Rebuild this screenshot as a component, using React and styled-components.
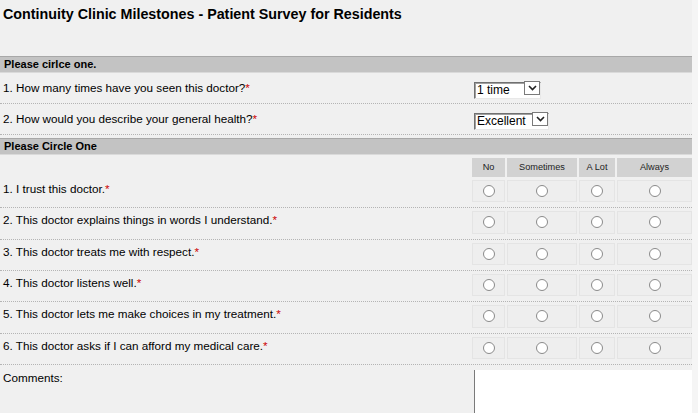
import React from 'react';
import styled, { createGlobalStyle } from 'styled-components';

const GlobalStyle = createGlobalStyle`
  html, body {
    margin: 0;
    padding: 0;
    background: #f5f5f5;
  }
  body {
    font-family: "Liberation Sans", Arial, sans-serif;
    color: #000;
  }
`;

const Page = styled.div`
  width: 692px;
  background: #f0f0f0;
  min-height: 413px;
  overflow: hidden;
`;

const Title = styled.h1`
  margin: 0;
  padding: 6px 0 0 3px;
  height: 50px;
  font-size: 14.3px;
  line-height: 17px;
  font-weight: bold;
`;

const SectionBar = styled.div`
  height: 15px;
  margin-top: ${props => props.$gap || 0}px;
  background: #c3c3c3;
  border-top: 1px solid #a8a8a8;
  border-bottom: 1px solid #dadada;
  padding-left: 4px;
  font-size: 11px;
  font-weight: bold;
  line-height: 15px;
`;

const FieldRow = styled.div`
  display: grid;
  grid-template-columns: 474px 1fr;
  align-items: center;
  height: 30px;
  border-bottom: 1px dotted #b4b4b4;
`;

const Label = styled.div`
  padding-left: 3px;
  padding-bottom: 2px;
  font-size: 11.7px;
`;

const Required = styled.span`
  color: #cc0000;
`;

const SelectWrap = styled.div`
  position: relative;
  width: ${props => props.$width}px;
  height: 17px;
`;

const Select = styled.select`
  appearance: none;
  -webkit-appearance: none;
  box-sizing: border-box;
  width: 100%;
  height: 100%;
  margin: 0;
  padding: 0 0 0 2px;
  background: #fff;
  border: 1px solid;
  border-color: #707070 #e8e8e8 #e8e8e8 #707070;
  box-shadow: inset 1px 1px 0 #a0a0a0;
  font-family: "Liberation Sans", Arial, sans-serif;
  font-size: 12px;
  line-height: 15px;
  color: #000;
`;

const SelectArrow = styled.span`
  position: absolute;
  right: 1px;
  top: 1px;
  width: 16px;
  height: 14px;
  box-sizing: border-box;
  border: 1px solid #7a7a7a;
  background: #fff;
  display: flex;
  align-items: center;
  justify-content: center;
  pointer-events: none;
`;

const ScaleRow = styled.div`
  display: grid;
  grid-template-columns: 470px 33px 70px 36px 75px;
  column-gap: 2px;
  align-items: stretch;
  height: ${props => props.$head ? '19px' : '30.33px'};
  margin-top: ${props => props.$head ? '3px' : '0'};
  border-bottom: ${props => props.$head ? 'none' : '1px dotted #b4b4b4'};
`;

const RowLabel = styled.div`
  display: flex;
  align-items: center;
  padding-left: 3px;
  padding-bottom: 7px;
  font-size: 11.7px;
`;

const HeadCell = styled.div`
  background: #d2d2d2;
  font-size: 9.2px;
  line-height: 19px;
  text-align: center;
  color: #222;
`;

const RadioCell = styled.div`
  margin: 3px 0 5px;
  background: #eeeeee;
  border: 1px solid #e4e4e4;
  display: flex;
  align-items: center;
  justify-content: center;
`;

const Radio = styled.input`
  appearance: none;
  -webkit-appearance: none;
  margin: 0;
  width: 12px;
  height: 12px;
  border-radius: 50%;
  border: 1px solid #8a8a8a;
  background: #fff;
`;

const CommentsRow = styled.div`
  display: grid;
  grid-template-columns: 474px 1fr;
  height: 60px;
`;

const CommentsLabel = styled.div`
  padding: 6px 0 0 3px;
  font-size: 11.7px;
`;

const Comments = styled.textarea`
  margin-top: 5px;
  box-sizing: border-box;
  height: 60px;
  border: none;
  border-left: 1px solid #7a7a7a;
  background: #fff;
  resize: none;
  outline: none;
`;

const Chevron = () => (
  <svg width="9" height="6" viewBox="0 0 9 6">
    <path d="M1 1 L4.5 4.5 L8 1" fill="none" stroke="#222" strokeWidth="1.6" />
  </svg>
);

const DropDown = ({ width, options }) => (
  <SelectWrap $width={width}>
    <Select defaultValue={options[0]}>
      {options.map(o => <option key={o}>{o}</option>)}
    </Select>
    <SelectArrow><Chevron /></SelectArrow>
  </SelectWrap>
);

const choices = ['No', 'Sometimes', 'A Lot', 'Always'];

const statements = [
  'I trust this doctor.',
  'This doctor explains things in words I understand.',
  'This doctor treats me with respect.',
  'This doctor listens well.',
  'This doctor lets me make choices in my treatment.',
  'This doctor asks if I can afford my medical care.',
];

const App = () => (
  <>
    <GlobalStyle />
    <Page>
      <Title>Continuity Clinic Milestones - Patient Survey for Residents</Title>

      <SectionBar>Please cirlce one.</SectionBar>
      <FieldRow>
        <Label>1. How many times have you seen this doctor?<Required>*</Required></Label>
        <DropDown width={67} options={['1 time', '2-3 times', '4 or more times']} />
      </FieldRow>
      <FieldRow>
        <Label>2. How would you describe your general health?<Required>*</Required></Label>
        <DropDown width={75} options={['Excellent', 'Good', 'Fair', 'Poor']} />
      </FieldRow>

      <SectionBar $gap={3}>Please Circle One</SectionBar>
      <ScaleRow $head>
        <div />
        {choices.map(c => <HeadCell key={c}>{c}</HeadCell>)}
      </ScaleRow>
      {statements.map((s, i) => (
        <ScaleRow key={s}>
          <RowLabel>{i + 1}. {s}<Required>*</Required></RowLabel>
          {choices.map(c => (
            <RadioCell key={c}>
              <Radio type="radio" name={'q' + i} value={c} aria-label={c} />
            </RadioCell>
          ))}
        </ScaleRow>
      ))}

      <CommentsRow>
        <CommentsLabel>Comments:</CommentsLabel>
        <Comments />
      </CommentsRow>
    </Page>
  </>
);

export default App;
